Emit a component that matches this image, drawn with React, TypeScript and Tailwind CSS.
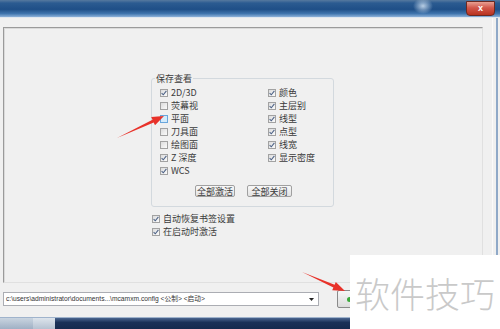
import React from 'react';

const CJK = '"Noto Sans CJK SC", "Liberation Sans", sans-serif';

function Box({ checked, hot }: { checked?: boolean; hot?: boolean }) {
  return (
    <span
      className={
        'w-[8px] h-[8px] shrink-0 border flex items-center justify-center ' +
        (hot
          ? 'border-[#6aa6dc] bg-[#d4ebfb]'
          : 'border-[#a2a2a2] bg-[linear-gradient(135deg,#dcdcdc,#fbfbfb)]')
      }
    >
      {checked && (
        <svg width="6" height="6" viewBox="0 0 6 6">
          <path d="M0.6 3.1 L2.3 4.8 L5.4 0.9" fill="none" stroke="#4f6488" strokeWidth="1.1" />
        </svg>
      )}
    </span>
  );
}

function Check({ label, checked, hot }: { label: string; checked?: boolean; hot?: boolean }) {
  return (
    <div className="h-[13px] flex items-center gap-[3px] text-[9px] leading-[13px] text-[#3a3a3a]">
      <Box checked={checked} hot={hot} />
      <span>{label}</span>
    </div>
  );
}

function Btn({ label, w }: { label: string; w: string }) {
  return (
    <div
      className={
        w +
        ' h-[12px] border border-[#a0a0a0] rounded-[2px] bg-[linear-gradient(to_bottom,#f8f8f8,#e2e2e2)] flex items-center justify-center text-[9px] leading-none text-[#3a3a3a]'
      }
    >
      {label}
    </div>
  );
}

const left = [
  { label: '2D/3D', checked: true },
  { label: '荧幕视' },
  { label: '平面', hot: true },
  { label: '刀具面' },
  { label: '绘图面' },
  { label: 'Z 深度', checked: true },
  { label: 'WCS', checked: true },
];

const right = ['颜色', '主层别', '线型', '点型', '线宽', '显示密度'];

export default function App() {
  return (
    <div
      className="w-[500px] h-[329px] relative overflow-hidden bg-[#f0f0f0] flex flex-col"
      style={{ fontFamily: CJK }}
    >
      {/* title bar */}
      <div className="h-[18px] shrink-0 relative bg-[radial-gradient(ellipse_10px_8px_at_423px_6px,rgba(220,235,250,0.8),transparent),linear-gradient(to_bottom,#56799f_0%,#2b5b91_18%,#1f4f87_55%,#3f74ad_80%,#8db2da_100%)] border-b border-[#dfe6ee]">
        <div className="absolute right-[5px] top-[1px] w-[29px] h-[15px] rounded-b-[4px] border border-[#6b2a22] bg-[linear-gradient(to_bottom,#e8a092_0%,#d2574a_45%,#b8321f_100%)] flex items-center justify-center text-white text-[9px] font-bold leading-none" style={{ fontFamily: '"Liberation Sans", sans-serif' }}>
          x
        </div>
      </div>

      <div className="flex flex-1">
        <div className="w-[492px] flex flex-col pl-[3px] pt-[9px]">
          {/* main panel */}
          <div className="w-[480px] h-[256px] border border-t-[#9a9a9a] border-l-[#9a9a9a] border-r-[#e0e0e0] border-b-[#e0e0e0] shadow-[inset_1px_1px_0_#dadada]">
            <div className="ml-[147px] mt-[50px] w-[183px] h-[129px] border border-[#d3d9de] rounded-[3px] pl-[8px]">
              <div className="-mt-[6px] -ml-[5px] px-[1px] bg-[#f0f0f0] w-fit text-[9px] leading-[11px] text-[#3a3a3a]">
                保存查看
              </div>
              <div className="mt-[2px] flex">
                <div className="w-[108px] flex flex-col">
                  {left.map((r) => (
                    <Check key={r.label} label={r.label} checked={r.checked} hot={r.hot} />
                  ))}
                </div>
                <div className="flex flex-col">
                  {right.map((r) => (
                    <Check key={r} label={r} checked />
                  ))}
                </div>
              </div>
              <div className="mt-[8px] flex gap-[12px] pl-[35px]">
                <Btn label="全部激活" w="w-[40px]" />
                <Btn label="全部关闭" w="w-[45px]" />
              </div>
            </div>
            <div className="ml-[148px] mt-[5px] flex flex-col">
              <Check label="自动恢复书签设置" checked />
              <Check label="在启动时激活" checked />
            </div>
          </div>

          {/* bottom row */}
          <div className="mt-[6px] h-[20px] flex items-center gap-[18px]">
            <div className="w-[316px] h-[14px] bg-white border border-[#abadb3] flex items-center pl-[2px] pr-[4px]">
              <span className="flex-1 text-[6.7px] leading-none text-[#333] whitespace-nowrap" style={{ fontFamily: '"Liberation Sans", "Noto Sans CJK SC", sans-serif' }}>
                c:\users\administrator\documents...\mcamxm.config &lt;公制&gt; &lt;启动&gt;
              </span>
              <svg width="5" height="3" viewBox="0 0 5 3">
                <path d="M0 0 H5 L2.5 3 Z" fill="#222" />
              </svg>
            </div>
            <div className="w-[40px] h-[18px] border border-[#8a8a8a] rounded-[2px] bg-[linear-gradient(to_bottom,#f6f6f6,#dcdcdc)] flex items-center pl-[9px]">
              <span className="w-[5px] h-[5px] rounded-full bg-[#3aa83a]" />
            </div>
          </div>
        </div>
        <div className="flex-1 flex border-l border-[#fafafa]">
          <div className="w-[3px]" />
          <div className="w-[2px] bg-[#8fa9c8]" />
        </div>
      </div>

      {/* taskbar */}
      <div className="h-[12px] shrink-0 flex border-t border-[#9fb3cc]">
        <div className="w-[33px] bg-[linear-gradient(to_bottom,#c9d4e0,#9fb0c4)]" />
        <div className="w-[22px] bg-[linear-gradient(to_bottom,#dde4ec,#b5c2d1)]" />
        <div className="flex-1 bg-[linear-gradient(to_bottom,#4b6690,#1a3158_40%,#152a4e)]" />
      </div>

      {/* arrows */}
      <svg className="absolute inset-0 pointer-events-none" width="500" height="329" viewBox="0 0 500 329">
        <polygon points="117,138 153.7,122.5 155,125.2 164,116 151.2,117 152.5,119.7" fill="#e8322a" />
        <polygon points="302,272 333.4,287.6 332.2,290.3 345,291 335.8,282.1 334.6,284.8" fill="#e8322a" />
      </svg>

      {/* watermark */}
      <div className="absolute left-[350px] top-[255px] w-[150px] h-[74px] bg-white flex items-center justify-center">
        <span className="text-[35px] leading-none font-light text-[#c9c9c9] whitespace-nowrap">软件技巧</span>
      </div>
    </div>
  );
}
